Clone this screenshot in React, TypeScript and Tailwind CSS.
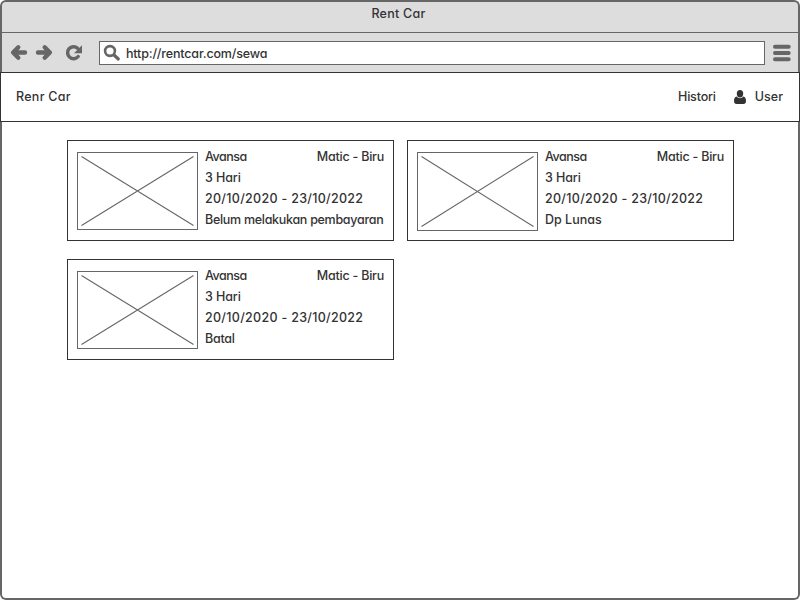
import React from "react";

type Rental = {
  car: string;
  duration: string;
  period: string;
  status: string;
  statusTracking: string;
  variant: string;
  photoHeight: number;
};

const rentals: Rental[] = [
  {
    car: "Avansa",
    duration: "3 Hari",
    period: "20/10/2020 - 23/10/2022",
    status: "Belum melakukan pembayaran",
    statusTracking: "tracking-[-0.29px]",
    variant: "Matic - Biru",
    photoHeight: 78,
  },
  {
    car: "Avansa",
    duration: "3 Hari",
    period: "20/10/2020 - 23/10/2022",
    status: "Dp Lunas",
    statusTracking: "tracking-[0px]",
    variant: "Matic - Biru",
    photoHeight: 79,
  },
  {
    car: "Avansa",
    duration: "3 Hari",
    period: "20/10/2020 - 23/10/2022",
    status: "Batal",
    statusTracking: "tracking-[-0.25px]",
    variant: "Matic - Biru",
    photoHeight: 78,
  },
];

function Photo({ height }: { height: number }) {
  return (
    <svg width="121" height={height} className="block shrink-0" fill="none" stroke="#666666">
      <rect x="0.5" y="0.5" width="120" height={height - 1} />
      <path d={`M4.5 4.5L116.5 ${height - 4.5}M116.5 4.5L4.5 ${height - 4.5}`} strokeWidth="1.1" />
    </svg>
  );
}

function RentalCard({ rental }: { rental: Rental }) {
  return (
    <article className="flex h-[101px] w-[327px] border border-[#333333] bg-white pt-[11px] pr-[9px] pl-[9px]">
      <Photo height={rental.photoHeight} />
      <div className="-mt-[6px] ml-[7px] min-w-0 flex-1 leading-[21px] whitespace-nowrap">
        <div className="flex justify-between">
          <span className="tracking-[-0.5px]">{rental.car}</span>
          <span className="tracking-[-0.23px]">{rental.variant}</span>
        </div>
        <div className="tracking-[-0.1px]">{rental.duration}</div>
        <div className="tracking-[0.3px]">{rental.period}</div>
        <div className={rental.statusTracking}>{rental.status}</div>
      </div>
    </article>
  );
}

export default function App() {
  return (
    <div className="flex h-[600px] w-[800px] flex-col overflow-hidden bg-white font-['Inter','Liberation_Sans',sans-serif] text-[12.5px] font-medium text-[#333333] [font-feature-settings:'cv11','calt'_0]">
      <header className="flex h-[72px] shrink-0 flex-col rounded-t-[6px] border-2 border-b-0 border-[#666666] bg-[#dddddd]">
        <div className="flex h-[31px] justify-center border-b border-[#666666] pt-[1px] pr-[3px] leading-[21px] tracking-[0.25px]">Rent Car</div>
        <div className="flex flex-1 items-start pt-[8px]">
          <svg width="97" height="24" viewBox="2 41 97 24" fill="none" stroke="#666666">
            <path d="M25 52.5H14M18.3 47.3L13.1 52.5L18.3 57.7" strokeWidth="4.4" strokeLinecap="round" strokeLinejoin="round" />
            <path d="M38 52.5H49M44.7 47.3L49.9 52.5L44.7 57.7" strokeWidth="4.4" strokeLinecap="round" strokeLinejoin="round" />
            <path d="M78.2 56.5A6 6 0 1 1 77.6 48.2" strokeWidth="3.5" strokeLinecap="round" />
            <path d="M82 45.3V53.2H74Z" fill="#666666" stroke="none" />
          </svg>
          <div className="flex h-[24px] w-[666px] items-center border border-[#666666] bg-white">
            <svg width="26" height="22" viewBox="100 42 26 22" fill="none" stroke="#666666" className="shrink-0">
              <circle cx="110" cy="51" r="4.9" strokeWidth="2.6" />
              <path d="M114 55L118.3 59" strokeWidth="3.2" strokeLinecap="round" />
            </svg>
            <span className="pt-[2px] tracking-[-0.16px]">http://rentcar.com/sewa</span>
          </div>
          <svg width="18" height="24" viewBox="773 41 18 24" className="ml-[8px]" stroke="#666666" strokeWidth="4" strokeLinecap="round">
            <path d="M775 46.8H788.7M775 53H788.7M775 59.2H788.7" />
          </svg>
        </div>
      </header>

      <nav className="flex h-[50px] shrink-0 items-center border border-[#333333] bg-white pr-[16px] pl-[15px]">
        <span className="tracking-[0.28px]">Renr Car</span>
        <span className="ml-auto tracking-[-0.17px]">Histori</span>
        <svg width="12" height="14" viewBox="0 0 12 14" fill="#333333" className="mr-[9px] ml-[18px]">
          <ellipse cx="6" cy="3.7" rx="3.2" ry="3.7" />
          <path d="M2.7 6.6C.8 7 0 8.5 0 11C0 13 .9 14 2.5 14H9.5C11.1 14 12 13 12 11C12 8.5 11.2 7 9.3 6.6C8.5 7.8 7.4 8.3 6 8.3S3.5 7.8 2.7 6.6Z" />
        </svg>
        <span>User</span>
      </nav>

      <main className="flex-1 rounded-b-[6px] border-2 border-t-0 border-[#666666] bg-white pt-[18px] pl-[65px]">
        <div className="grid w-[667px] grid-cols-2 gap-x-[13px] gap-y-[18px]">
          {rentals.map((rental) => (
            <RentalCard key={rental.status} rental={rental} />
          ))}
        </div>
      </main>
    </div>
  );
}
